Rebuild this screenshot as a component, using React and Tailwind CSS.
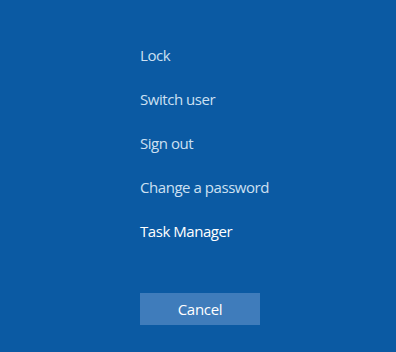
export default function App() {
  const items = ["Lock", "Switch user", "Sign out", "Change a password"];
  return (
    <div className="w-[396px] h-[352px] bg-[#0b5aa3] overflow-hidden" style={{ fontFamily: '"Open Sans", "Noto Sans", sans-serif' }}>
      <div className="pl-[140px] pt-[44px] flex flex-col">
        {items.map((t) => (
          <div key={t} className="h-[44px] text-[15px] leading-[22px] text-[#cde0f2] tracking-[-0.45px]">{t}</div>
        ))}
        <div className="h-[44px] text-[15px] leading-[22px] text-white tracking-[-0.45px]">Task Manager</div>
        <button className="mt-[29px] w-[120px] h-[32px] bg-[#3f7cbb] text-white text-[15px] tracking-[-0.3px] flex items-center justify-center">Cancel</button>
      </div>
    </div>
  );
}
